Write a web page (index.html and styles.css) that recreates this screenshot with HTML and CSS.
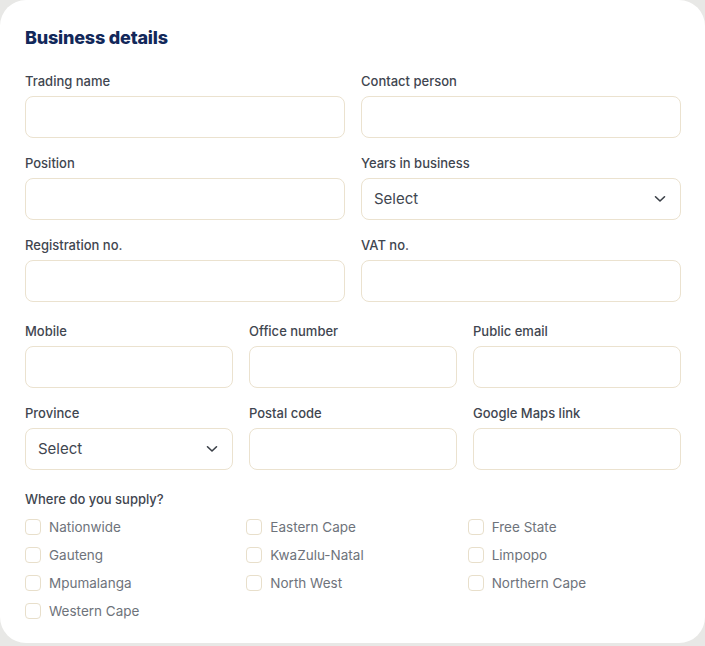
FILE: index.html
```html
<!DOCTYPE html>
<html lang="en">
<head>
<meta charset="utf-8">
<title>Business details</title>
<link rel="stylesheet" href="styles.css">
</head>
<body>
<div class="card">
  <h2 class="title">Business details</h2>

  <div class="grid two">
    <div class="field">
      <label class="label">Trading name</label>
      <div class="input"></div>
    </div>
    <div class="field">
      <label class="label">Contact person</label>
      <div class="input"></div>
    </div>
    <div class="field">
      <label class="label">Position</label>
      <div class="input"></div>
    </div>
    <div class="field">
      <label class="label">Years in business</label>
      <div class="input select"><span>Select</span>
        <svg class="chev" width="12" height="8" viewBox="0 0 12 8"><path d="M1.5 1.75 L6 6 L10.5 1.75" fill="none" stroke="#3a3f47" stroke-width="1.6" stroke-linecap="round" stroke-linejoin="round"/></svg>
      </div>
    </div>
    <div class="field">
      <label class="label">Registration no.</label>
      <div class="input"></div>
    </div>
    <div class="field">
      <label class="label">VAT no.</label>
      <div class="input"></div>
    </div>
  </div>

  <div class="grid three">
    <div class="field">
      <label class="label">Mobile</label>
      <div class="input"></div>
    </div>
    <div class="field">
      <label class="label">Office number</label>
      <div class="input"></div>
    </div>
    <div class="field">
      <label class="label">Public email</label>
      <div class="input"></div>
    </div>
    <div class="field">
      <label class="label">Province</label>
      <div class="input select"><span>Select</span>
        <svg class="chev" width="12" height="8" viewBox="0 0 12 8"><path d="M1.5 1.75 L6 6 L10.5 1.75" fill="none" stroke="#3a3f47" stroke-width="1.6" stroke-linecap="round" stroke-linejoin="round"/></svg>
      </div>
    </div>
    <div class="field">
      <label class="label">Postal code</label>
      <div class="input"></div>
    </div>
    <div class="field">
      <label class="label">Google Maps link</label>
      <div class="input"></div>
    </div>
  </div>

  <div class="supply">
    <div class="label">Where do you supply?</div>
    <div class="checks">
      <label class="check"><span class="box"></span>Nationwide</label>
      <label class="check"><span class="box"></span>Eastern Cape</label>
      <label class="check"><span class="box"></span>Free State</label>
      <label class="check"><span class="box"></span>Gauteng</label>
      <label class="check"><span class="box"></span>KwaZulu-Natal</label>
      <label class="check"><span class="box"></span>Limpopo</label>
      <label class="check"><span class="box"></span>Mpumalanga</label>
      <label class="check"><span class="box"></span>North West</label>
      <label class="check"><span class="box"></span>Northern Cape</label>
      <label class="check"><span class="box"></span>Western Cape</label>
    </div>
  </div>
</div>
</body>
</html>
```

FILE: styles.css
```css
* { box-sizing: border-box; }
html, body {
  margin: 0;
  padding: 0;
  background: #e8e8e6;
}
body {
  font-family: Inter, "Noto Sans", sans-serif;
  width: 705px;
  height: 646px;
  overflow: hidden;
}
.card {
  background: #ffffff;
  border-radius: 26px;
  height: 643px;
  padding: 27px 24px 0 25px;
}
.title {
  margin: 0;
  font-size: 18px;
  line-height: 22px;
  font-weight: 800;
  color: #12285a;
  letter-spacing: -0.2px;
}
.grid {
  display: grid;
  column-gap: 16px;
  row-gap: 17px;
}
.two {
  grid-template-columns: 1fr 1fr;
  margin-top: 24px;
}
.three {
  grid-template-columns: 1fr 1fr 1fr;
  margin-top: 21px;
}
.field {
  display: flex;
  flex-direction: column;
}
.label {
  display: block;
  font-size: 13px;
  line-height: 16px;
  font-weight: 500;
  color: #3f4650;
  margin-bottom: 7px;
}
.input {
  height: 42px;
  border: 1px solid #ebe2cf;
  border-radius: 8px;
  background: #fff;
}
.select {
  display: flex;
  align-items: center;
  justify-content: space-between;
  padding: 0 14px 1px 12px;
  font-size: 15px;
  color: #3f4650;
}
.chev { display: block; }
.supply {
  margin-top: 21px;
}
.supply .label {
  margin-bottom: 6px;
}
.checks {
  display: grid;
  grid-template-columns: repeat(3, 1fr);
  column-gap: 8px;
}
.check {
  display: flex;
  align-items: center;
  height: 28px;
  font-size: 13.5px;
  color: #6e737b;
}
.box {
  width: 16px;
  height: 16px;
  border: 1px solid #e8dfcb;
  border-radius: 4px;
  margin-right: 8px;
  flex: none;
}
```
